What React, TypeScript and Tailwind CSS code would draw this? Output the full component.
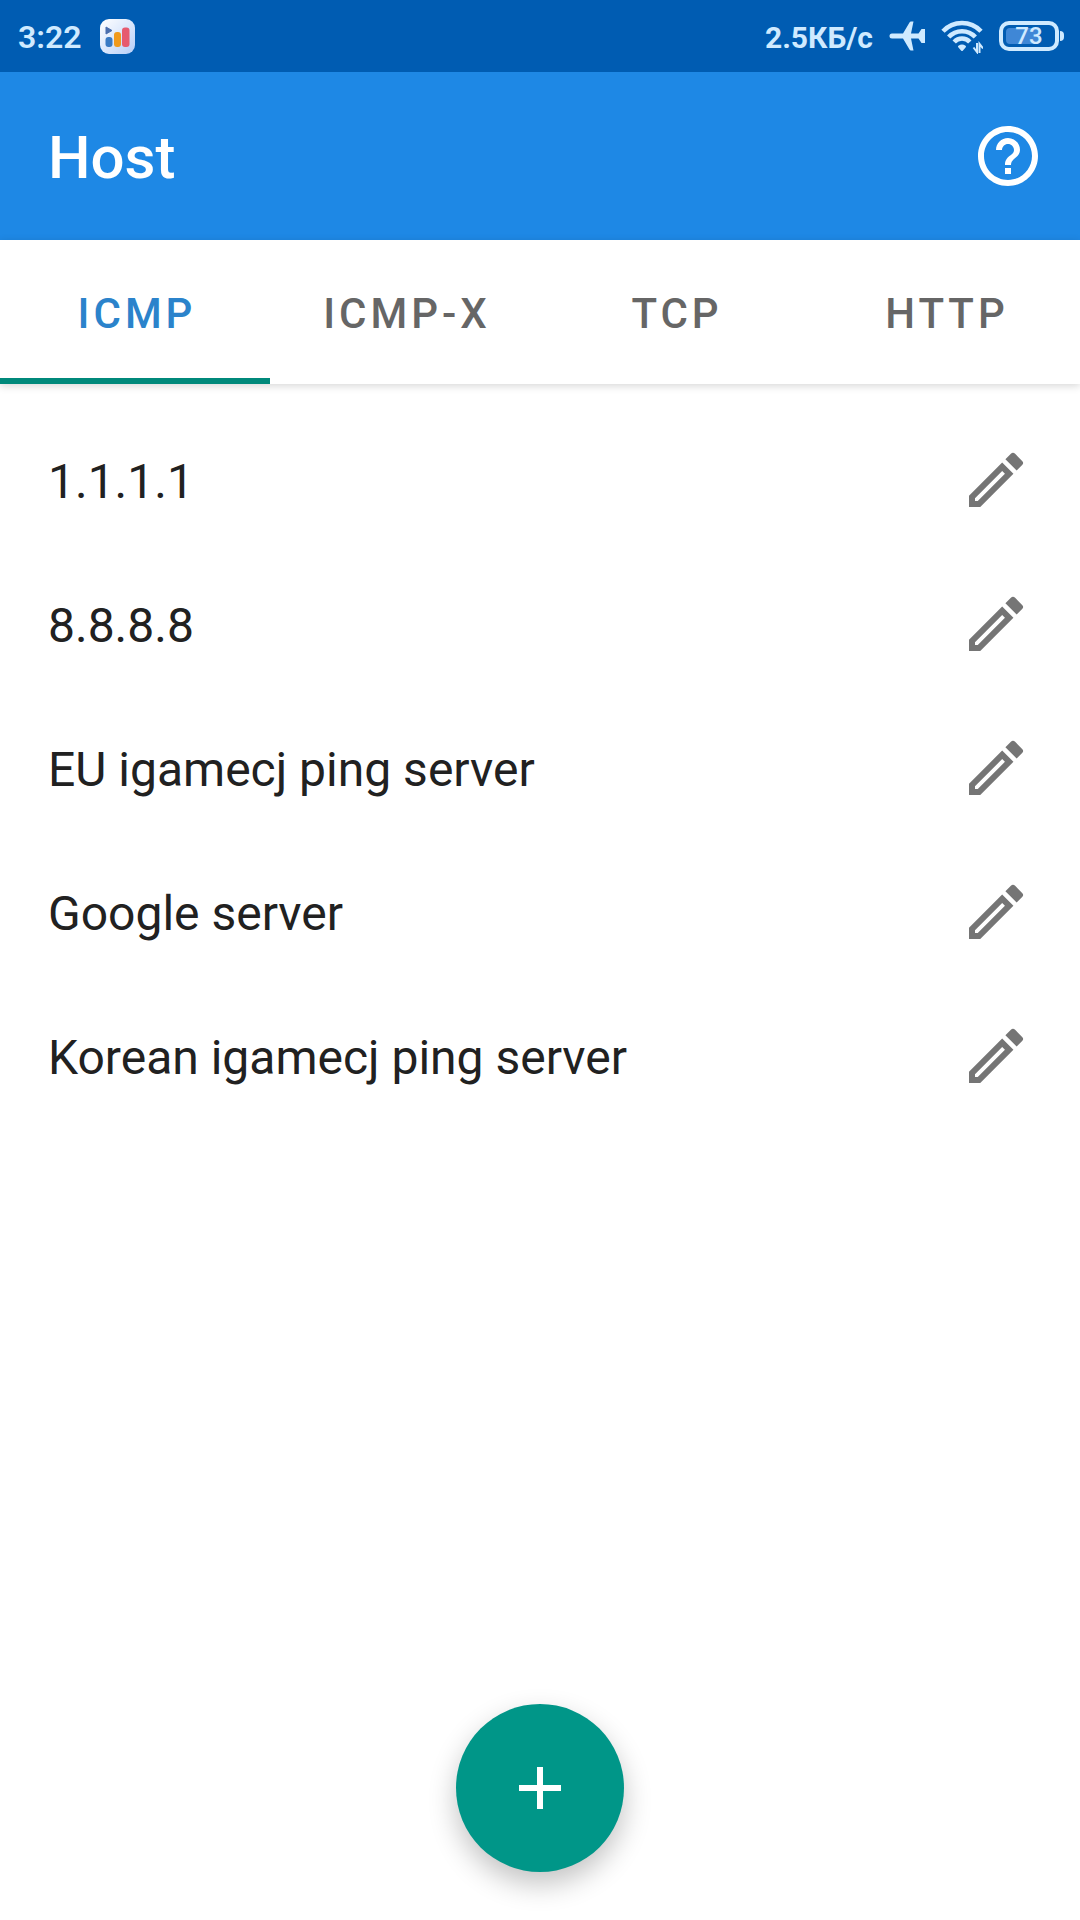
import { useState } from "react";

const TABS = ["ICMP", "ICMP-X", "TCP", "HTTP"];

const HOSTS = [
  "1.1.1.1",
  "8.8.8.8",
  "EU igamecj ping server",
  "Google server",
  "Korean igamecj ping server",
];

function AppBadge() {
  return (
    <svg viewBox="0 0 35 35" className="size-[35px]" aria-hidden="true">
      <defs>
        <linearGradient id="badge" x1="0" y1="0" x2="1" y2="1">
          <stop offset="0" stopColor="#ffffff" />
          <stop offset="0.5" stopColor="#dce8fc" />
          <stop offset="1" stopColor="#b4cdf8" />
        </linearGradient>
      </defs>
      <rect width="35" height="35" rx="9" fill="url(#badge)" />
      <path d="M6 8l6 3.500-6 3.500z" fill="#4a6fae" stroke="#4a6fae" strokeLinejoin="round" />
      <rect x="5.500" y="18" width="7" height="10" rx="3" fill="#3a7bc4" />
      <rect x="14" y="13" width="7" height="15" rx="3" fill="#f09a1c" />
      <rect x="22" y="8.500" width="7.500" height="19.500" rx="3" fill="#e65a6e" />
    </svg>
  );
}

function AirplaneIcon() {
  return (
    <svg viewBox="0 0 36 30" className="h-[30px] w-9" fill="currentColor" aria-hidden="true">
      <path d="M3 12.500h11L20.500 1.500Q21 .5 22 .5h2.500L22 12.500h7.500l3-4.500H36v14h-3.500l-3-4.500H22l2.500 12H22q-1 0-1.500-1L14 17.500H3a2.500 2.500 0 0 1 0-5z" />
    </svg>
  );
}

function WifiIcon() {
  return (
    <svg viewBox="0 0 42 36" className="h-9 w-[42px]" aria-hidden="true">
      <g fill="none" stroke="currentColor" strokeWidth="4.500">
        <path d="M2 13.200a26 26 0 0 1 38 0" />
        <path d="M7.700 19a18 18 0 0 1 26.600 0" />
        <path d="M13.200 24a10.500 10.500 0 0 1 15.600 0" />
      </g>
      <path d="M18 28.500q3-2 6 0l-3 3.500z" fill="currentColor" stroke="currentColor" strokeWidth="2" strokeLinejoin="round" />
      <path d="M36 25v9l-3.500-4.500M38.500 35v-9l3.500 4.500" fill="none" stroke="currentColor" strokeWidth="2" />
    </svg>
  );
}

function Battery({ level }: { level: number }) {
  return (
    <div className="flex items-center gap-px">
      <div className="relative h-[30px] w-[60px] rounded-[10px] border-4 border-current p-[3px]">
        <div className="h-full rounded-sm bg-[#3f87d6]" style={{ width: `${level}%` }} />
        <span className="absolute inset-0 flex items-center justify-center text-[24px] font-medium">
          {level}
        </span>
      </div>
      <div className="h-2.5 w-1 rounded-r-sm bg-current" />
    </div>
  );
}

function HelpIcon() {
  return (
    <svg viewBox="0 0 24 24" className="size-[72px]" fill="currentColor" aria-hidden="true">
      <path d="M11 18h2v-2h-2v2zm1-16C6.480 2 2 6.480 2 12s4.480 10 10 10 10-4.480 10-10S17.520 2 12 2zm0 18c-4.410 0-8-3.590-8-8s3.590-8 8-8 8 3.590 8 8-3.590 8-8 8zm0-14c-2.210 0-4 1.790-4 4h2c0-1.100.9-2 2-2s2 .9 2 2c0 2-3 1.750-3 5h2c0-2.250 3-2.500 3-5 0-2.210-1.790-4-4-4z" />
    </svg>
  );
}

function PencilIcon() {
  return (
    <svg viewBox="0 0 24 24" className="size-[72px]" fill="currentColor" aria-hidden="true">
      <path
        fillRule="evenodd"
        d="M3 17.250V21h3.750L17.810 9.940l-3.750-3.750L3 17.250zM5.920 19H5v-.92l9.060-9.060.92.92L5.920 19z"
      />
      <path d="M20.710 7.040a1 1 0 0 0 0-1.410l-2.340-2.340a1 1 0 0 0-1.410 0l-1.830 1.830 3.750 3.750 1.830-1.830z" />
    </svg>
  );
}

function StatusBar() {
  return (
    <div className="flex h-[72px] items-center justify-between bg-[#005cb2] pr-4 pl-[18px] text-[#cfeaff]">
      <div className="flex items-center gap-[18px]">
        <span className="pt-0.5 text-[32px] font-semibold">3:22</span>
        <AppBadge />
      </div>
      <div className="flex items-center gap-4">
        <span className="pt-0.5 text-[30px] font-bold">2.5КБ/с</span>
        <AirplaneIcon />
        <WifiIcon />
        <Battery level={73} />
      </div>
    </div>
  );
}

export default function App() {
  const [activeTab, setActiveTab] = useState("ICMP");

  return (
    <div className="flex min-h-screen flex-col bg-white font-[Roboto,sans-serif]">
      <StatusBar />

      <header className="flex h-[168px] items-center justify-between bg-[#1e88e5] pr-9 pl-12 text-white">
        <h1 className="pt-1 text-[60px] font-medium">Host</h1>
        <button type="button" aria-label="Help">
          <HelpIcon />
        </button>
      </header>

      <div role="tablist" className="grid h-36 grid-cols-4 shadow-[0_2px_8px_rgba(0,0,0,0.16)]">
        {TABS.map((tab) => (
          <button
            key={tab}
            type="button"
            role="tab"
            aria-selected={tab === activeTab}
            onClick={() => setActiveTab(tab)}
            className={
              tab === activeTab
                ? "border-y-6 border-t-transparent border-b-[#00897b] pt-0.5 pl-1 text-[42px] font-medium tracking-[4px] text-[#2b83cb]"
                : "border-y-6 border-transparent pt-0.5 pl-1 text-[42px] font-medium tracking-[4px] text-[#666666]"
            }
          >
            {tab}
          </button>
        ))}
      </div>

      <main className="flex-1 pt-6">
        <ul>
          {HOSTS.map((host) => (
            <li key={host} className="flex h-36 items-center justify-between px-12">
              <span className="pt-1 text-[48px] text-[#212121]">{host}</span>
              <button type="button" aria-label={`Edit ${host}`} className="text-[#757575]">
                <PencilIcon />
              </button>
            </li>
          ))}
        </ul>
      </main>

      <div className="flex justify-center pb-12">
        <button
          type="button"
          aria-label="Add host"
          className="flex size-[168px] items-center justify-center rounded-full bg-[#009688] text-white shadow-[0_12px_28px_rgba(0,0,0,0.24)]"
        >
          <svg viewBox="0 0 24 24" className="size-[72px]" fill="currentColor" aria-hidden="true">
            <path d="M19 13h-6v6h-2v-6H5v-2h6V5h2v6h6v2z" />
          </svg>
        </button>
      </div>
    </div>
  );
}
